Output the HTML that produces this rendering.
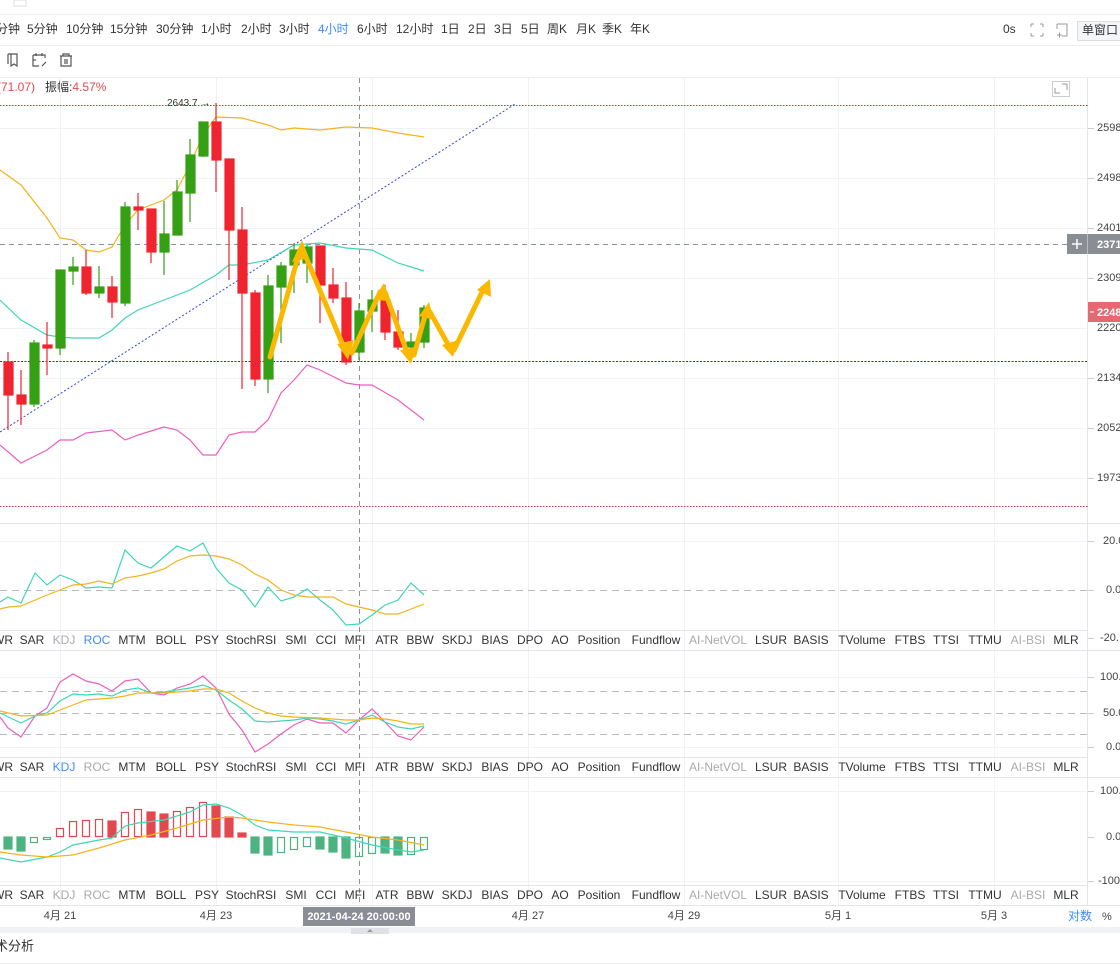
<!DOCTYPE html>
<html><head><meta charset="utf-8"><style>
html,body{margin:0;padding:0;background:#fff;width:1120px;height:965px;overflow:hidden}
svg{display:block;font-family:"Liberation Sans","Noto Sans CJK SC",sans-serif}
</style></head><body>
<svg width="1120" height="965" viewBox="0 0 1120 965" xmlns="http://www.w3.org/2000/svg">
<rect x="14" y="0" width="12" height="6" fill="#fff" stroke="#ddd"/>
<line x1="0" y1="14.5" x2="1120" y2="14.5" stroke="#eceef2"/>
<g font-size="12" fill="#333" dominant-baseline="middle">
<text x="-4" y="30">分钟</text><text x="27" y="30">5分钟</text><text x="66" y="30">10分钟</text><text x="110" y="30">15分钟</text><text x="156" y="30">30分钟</text><text x="201" y="30">1小时</text><text x="241" y="30">2小时</text><text x="279" y="30">3小时</text><text x="318" y="30" fill="#3d8bfd">4小时</text><text x="357" y="30">6小时</text><text x="396" y="30">12小时</text><text x="441" y="30">1日</text><text x="468" y="30">2日</text><text x="494" y="30">3日</text><text x="521" y="30">5日</text><text x="547" y="30">周K</text><text x="576" y="30">月K</text><text x="602" y="30">季K</text><text x="630" y="30">年K</text>
<text x="1003" y="30">0s</text>
</g>
<g stroke="#999" fill="none" stroke-width="1">
<path d="M1031 24h3M1031 24v3M1043 24h-3M1043 24v3M1031 36h3M1031 36v-3M1043 36h-3M1043 36v-3"/>
<path d="M1057 24h10v12h-5M1057 24v5M1057 35h5M1059.5 32.5v5"/>
</g>
<rect x="1077.5" y="21.5" width="50" height="19" fill="#f5f6f8" stroke="#ddd"/>
<text x="1082" y="31" font-size="12" fill="#333" dominant-baseline="middle">单窗口</text>
<line x1="0" y1="45.5" x2="1120" y2="45.5" stroke="#eceef2"/>
<g stroke="#555" fill="none" stroke-width="1.2">
<path d="M8 54h9v12l-3-2-3 2V54M8 54v10"/>
<path d="M33 55h12v3M33 55v11h6M36 53v3M42 53v3M33 60h3M42 66l4-4"/>
<path d="M60 56h12M63 56v-2h6v2M61 56v10h10V56M65 59v5M67 59v5"/>
</g>
<line x1="0" y1="77.5" x2="1120" y2="77.5" stroke="#eceef2"/>
<text x="-3" y="88" font-size="12" fill="#e2494f" dominant-baseline="middle">(71.07)</text>
<text x="45" y="88" font-size="12" fill="#333" dominant-baseline="middle">振幅:<tspan fill="#e2494f">4.57%</tspan></text>
<rect x="1052.5" y="81.5" width="17" height="15" fill="#fff" stroke="#ccc"/>
<path d="M1055 88v5h5M1067 90v-6h-5" stroke="#999" fill="none"/>
<g stroke="#f0f2f5" stroke-width="1">
<line x1="60.5" y1="78" x2="60.5" y2="905"/><line x1="216.5" y1="78" x2="216.5" y2="905"/><line x1="372.5" y1="78" x2="372.5" y2="905"/><line x1="528.5" y1="78" x2="528.5" y2="905"/><line x1="684.5" y1="78" x2="684.5" y2="905"/><line x1="838.5" y1="78" x2="838.5" y2="905"/><line x1="994.5" y1="78" x2="994.5" y2="905"/>
<line x1="0" y1="128.5" x2="1088" y2="128.5"/><line x1="0" y1="178.5" x2="1088" y2="178.5"/><line x1="0" y1="228.5" x2="1088" y2="228.5"/><line x1="0" y1="278.5" x2="1088" y2="278.5"/><line x1="0" y1="328.5" x2="1088" y2="328.5"/><line x1="0" y1="378.5" x2="1088" y2="378.5"/><line x1="0" y1="428.5" x2="1088" y2="428.5"/><line x1="0" y1="478.5" x2="1088" y2="478.5"/>
<line x1="0" y1="541.5" x2="1088" y2="541.5"/><line x1="0" y1="677.5" x2="1088" y2="677.5"/><line x1="0" y1="747.5" x2="1088" y2="747.5"/><line x1="0" y1="791.5" x2="1088" y2="791.5"/><line x1="0" y1="881.5" x2="1088" y2="881.5"/>
</g>
<line x1="1087.5" y1="78" x2="1087.5" y2="905" stroke="#e3e5ea"/>
<g stroke="#e3e5ea"><line x1="0" y1="523.5" x2="1120" y2="523.5"/><line x1="0" y1="630.5" x2="1088" y2="630.5"/><line x1="0" y1="650.5" x2="1120" y2="650.5"/><line x1="0" y1="757.5" x2="1088" y2="757.5"/><line x1="0" y1="777.5" x2="1120" y2="777.5"/><line x1="0" y1="885.5" x2="1088" y2="885.5"/><line x1="0" y1="905.5" x2="1120" y2="905.5"/></g>
<line x1="0" y1="105.5" x2="1088" y2="105.5" stroke="#ee2a35" stroke-dasharray="1.5,1.5"/>
<line x1="0" y1="506.5" x2="1088" y2="506.5" stroke="#ee2a35" stroke-dasharray="1.5,1.5"/>
<line x1="0" y1="361.5" x2="1088" y2="361.5" stroke="#8b1a1a" stroke-dasharray="2,1.5"/>
<line x1="0" y1="244.5" x2="1070" y2="244.5" stroke="#8a929c" stroke-dasharray="5,4"/>
<line x1="359.5" y1="78" x2="359.5" y2="905" stroke="#8a929c" stroke-dasharray="5,4"/>
<g stroke="#bbb" stroke-dasharray="7,5"><line x1="0" y1="590.5" x2="1088" y2="590.5"/><line x1="0" y1="691.5" x2="1088" y2="691.5"/><line x1="0" y1="713.5" x2="1088" y2="713.5"/><line x1="0" y1="734.5" x2="1088" y2="734.5"/></g>
<text x="167" y="106" font-size="10" fill="#333">2643.7 →</text>
<line x1="0" y1="432" x2="515" y2="104" stroke="#3848d6" stroke-dasharray="2,2"/>
<g fill="none" stroke-width="1.2">
<polyline stroke="#f5b31c" points="0,170 21,185 47,218 60,238 73,240 86,250 99,252 112,247 125,225 138,210 164,200 177,190 190,165 203,135 216,117 242,118 268,125 281,130 294,128 320,130 346,127 372,128 398,133 424,137"/>
<polyline stroke="#3fd6b6" points="0,300 21,320 47,335 60,337 73,338 99,338 112,330 125,318 138,310 164,300 190,290 216,275 229,265 242,265 268,260 294,245 320,243 346,248 372,250 398,263 424,271"/>
<polyline stroke="#ea5fc3" points="0,445 21,463 47,450 60,440 73,440 86,433 112,430 125,440 138,435 164,427 177,430 190,440 203,455 216,455 229,435 242,432 255,432 268,420 281,393 294,380 307,365 320,370 346,383 359,385 372,385 398,400 424,420"/>
</g>
<g stroke-width="1.2">
<g stroke="#f0242f" fill="#f0242f">
<line x1="8" y1="352" x2="8" y2="430"/><rect x="4" y="362" width="9" height="33"/>
<line x1="21" y1="370" x2="21" y2="425"/><rect x="17" y="395" width="9" height="9"/>
<line x1="47" y1="322" x2="47" y2="375"/><rect x="43" y="345" width="9" height="3"/>
<line x1="86" y1="250" x2="86" y2="295"/><rect x="82" y="267" width="9" height="26"/>
<line x1="112" y1="276" x2="112" y2="318"/><rect x="108" y="287" width="9" height="15"/>
<line x1="138" y1="193" x2="138" y2="230"/><rect x="134" y="207" width="9" height="3"/>
<line x1="151" y1="209" x2="151" y2="263"/><rect x="147" y="209" width="9" height="43"/>
<line x1="216" y1="103" x2="216" y2="192"/><rect x="212" y="122" width="9" height="38"/>
<line x1="229" y1="159" x2="229" y2="280"/><rect x="225" y="159" width="9" height="71"/>
<line x1="242" y1="207" x2="242" y2="389"/><rect x="238" y="230" width="9" height="63"/>
<line x1="255" y1="290" x2="255" y2="386"/><rect x="251" y="293" width="9" height="86"/>
<line x1="320" y1="246" x2="320" y2="323"/><rect x="316" y="246" width="9" height="39"/>
<line x1="333" y1="268" x2="333" y2="303"/><rect x="329" y="285" width="9" height="13"/>
<line x1="346" y1="282" x2="346" y2="365"/><rect x="342" y="298" width="9" height="64"/>
<line x1="385" y1="285" x2="385" y2="340"/><rect x="381" y="300" width="9" height="32"/>
<line x1="398" y1="310" x2="398" y2="350"/><rect x="394" y="332" width="9" height="15"/>
</g>
<g stroke="#36a014" fill="#36a014">
<line x1="34" y1="340" x2="34" y2="407"/><rect x="30" y="343" width="9" height="61"/>
<line x1="60" y1="270" x2="60" y2="355"/><rect x="56" y="270" width="9" height="78"/>
<line x1="73" y1="257" x2="73" y2="285"/><rect x="69" y="267" width="9" height="4"/>
<line x1="99" y1="266" x2="99" y2="298"/><rect x="95" y="287" width="9" height="6"/>
<line x1="125" y1="202" x2="125" y2="306"/><rect x="121" y="207" width="9" height="96"/>
<line x1="164" y1="201" x2="164" y2="275"/><rect x="160" y="234" width="9" height="18"/>
<line x1="177" y1="180" x2="177" y2="235"/><rect x="173" y="192" width="9" height="43"/>
<line x1="190" y1="139" x2="190" y2="222"/><rect x="186" y="155" width="9" height="38"/>
<line x1="203" y1="122" x2="203" y2="157"/><rect x="199" y="122" width="9" height="34"/>
<line x1="268" y1="275" x2="268" y2="393"/><rect x="264" y="286" width="9" height="93"/>
<line x1="281" y1="262" x2="281" y2="343"/><rect x="277" y="266" width="9" height="21"/>
<line x1="294" y1="243" x2="294" y2="293"/><rect x="290" y="250" width="9" height="15"/>
<line x1="307" y1="245" x2="307" y2="283"/><rect x="303" y="247" width="9" height="16"/>
<line x1="359" y1="303" x2="359" y2="360"/><rect x="355" y="311" width="9" height="41"/>
<line x1="372" y1="290" x2="372" y2="332"/><rect x="368" y="300" width="9" height="11"/>
<line x1="411" y1="333" x2="411" y2="352"/><rect x="407" y="342" width="9" height="5"/>
<line x1="424" y1="305" x2="424" y2="348"/><rect x="420" y="308" width="9" height="34"/>
</g>
</g>
<g stroke="#fbb800" stroke-width="5" fill="none" stroke-linecap="round" stroke-linejoin="round">
<polyline points="270,357 300,250"/><polyline points="303,250 345,350"/><polyline points="352,353 380,292"/><polyline points="385,292 408,355"/><polyline points="414,355 426,312"/><polyline points="430,312 450,348"/><polyline points="454,350 484,288"/>
</g>
<g fill="#fbb800">
<polygon points="302,240 292,262 309,258"/><polygon points="348,360 337,344 354,340"/><polygon points="384,283 373,300 390,301"/><polygon points="411,364 400,350 416,347"/><polygon points="429,302 419,316 434,320"/><polygon points="453,357 442,345 458,340"/><polygon points="490,279 477,290 491,297"/>
</g>
<g fill="none" stroke-width="1.2">
<polyline stroke="#3fd6b6" points="0,602 8,597 21,603 35,573 47,585 60,575 73,580 86,588 99,587 112,588 125,550 138,563 151,568 164,557 177,546 190,551 203,543 216,568 229,583 242,590 255,607 268,587 281,601 294,597 307,589 320,600 333,610 346,625 359,624 372,615 385,605 398,600 411,583 424,595"/>
<polyline stroke="#f5b31c" points="0,609 8,607 21,606 47,595 60,590 73,585 86,584 99,581 112,584 125,578 138,576 151,573 164,569 177,561 190,556 203,555 216,556 229,559 242,565 255,574 268,580 281,590 294,595 307,597 333,597 346,604 359,607 372,610 385,614 398,614 411,609 424,604"/>
<polyline stroke="#ea5fc3" points="0,717 8,728 21,737 35,716 47,708 60,682 73,674 86,681 99,684 112,691 125,681 138,679 151,693 164,695 177,688 190,684 203,676 216,688 229,714 242,730 255,752 268,744 281,734 294,725 307,719 320,723 333,723 346,733 359,720 372,709 385,722 398,736 411,740 424,727"/>
<polyline stroke="#3fd6b6" points="0,713 21,723 35,716 47,713 60,701 73,694 86,695 99,694 112,696 125,690 138,688 151,693 164,692 177,690 190,688 203,685 216,690 229,700 242,709 255,721 268,722 294,720 307,718 320,719 333,721 346,724 359,720 372,715 385,722 398,727 411,729 424,726"/>
<polyline stroke="#f5b31c" points="0,711 21,716 47,715 60,710 73,705 86,700 99,699 112,698 125,696 138,693 164,693 177,692 190,691 203,689 216,689 229,693 242,701 255,708 268,713 281,716 294,717 320,718 346,720 359,720 372,718 385,719 398,721 411,724 424,724"/>
</g>
<g stroke-width="1.2">
<g fill="#4db380" stroke="#4db380">
<rect x="4" y="837" width="8" height="12"/><rect x="17" y="837" width="8" height="14"/><rect x="251" y="837" width="8" height="16"/><rect x="264" y="837" width="8" height="18"/><rect x="316" y="837" width="8" height="12"/><rect x="329" y="837" width="8" height="15"/><rect x="342" y="837" width="8" height="21"/><rect x="381" y="837" width="8" height="16"/><rect x="394" y="837" width="8" height="18"/>
</g>
<g fill="none" stroke="#4db380">
<rect x="30.5" y="837.5" width="7" height="5"/><rect x="43.5" y="837.5" width="7" height="2"/><rect x="277.5" y="837.5" width="7" height="15"/><rect x="290.5" y="837.5" width="7" height="12"/><rect x="303.5" y="837.5" width="7" height="9"/><rect x="355.5" y="837.5" width="7" height="19"/><rect x="368.5" y="837.5" width="7" height="16"/><rect x="407.5" y="837.5" width="7" height="17"/><rect x="420.5" y="837.5" width="7" height="12"/>
</g>
<g fill="#e2494f" stroke="#e2494f">
<rect x="108" y="821" width="8" height="16"/><rect x="147" y="812" width="8" height="25"/><rect x="160" y="814" width="8" height="23"/><rect x="212" y="806" width="8" height="31"/><rect x="225" y="817" width="8" height="20"/><rect x="238" y="833" width="8" height="4"/>
</g>
<g fill="none" stroke="#e2494f">
<rect x="56.5" y="828.5" width="7" height="8"/><rect x="69.5" y="821.5" width="7" height="15"/><rect x="82.5" y="820.5" width="7" height="16"/><rect x="95.5" y="819.5" width="7" height="17"/><rect x="121.5" y="812.5" width="7" height="24"/><rect x="134.5" y="809.5" width="7" height="27"/><rect x="173.5" y="811.5" width="7" height="25"/><rect x="186.5" y="807.5" width="7" height="29"/><rect x="199.5" y="802.5" width="7" height="34"/>
</g>
</g>
<g fill="none" stroke-width="1.2">
<polyline stroke="#3fd6b6" points="0,858 21,862 47,857 60,852 73,845 99,840 112,838 125,826 138,823 164,820 190,812 203,805 216,804 229,808 242,815 255,825 268,830 294,832 320,832 346,838 372,845 398,850 411,852 424,850"/>
<polyline stroke="#f5b31c" points="0,852 21,855 47,857 73,855 99,848 125,840 151,835 177,828 203,820 229,817 242,818 268,822 294,825 320,827 346,832 372,837 398,840 424,845"/>
</g>
<g font-size="12" fill="#333" text-anchor="middle" dominant-baseline="middle">
<g transform="translate(0,641)"><text x="3">WR</text><text x="32">SAR</text><text x="64" fill="#aaa">KDJ</text><text x="97" fill="#3d8bfd">ROC</text><text x="132">MTM</text><text x="171">BOLL</text><text x="207">PSY</text><text x="251">StochRSI</text><text x="296">SMI</text><text x="326">CCI</text><text x="355">MFI</text><text x="387">ATR</text><text x="420">BBW</text><text x="457">SKDJ</text><text x="495">BIAS</text><text x="530">DPO</text><text x="560">AO</text><text x="599">Position</text><text x="656">Fundflow</text><text x="718" fill="#aaa">AI-NetVOL</text><text x="771">LSUR</text><text x="811">BASIS</text><text x="862">TVolume</text><text x="910">FTBS</text><text x="946">TTSI</text><text x="985">TTMU</text><text x="1028" fill="#aaa">AI-BSI</text><text x="1066">MLR</text></g>
<g transform="translate(0,768)"><text x="3">WR</text><text x="32">SAR</text><text x="64" fill="#3d8bfd">KDJ</text><text x="97" fill="#aaa">ROC</text><text x="132">MTM</text><text x="171">BOLL</text><text x="207">PSY</text><text x="251">StochRSI</text><text x="296">SMI</text><text x="326">CCI</text><text x="355">MFI</text><text x="387">ATR</text><text x="420">BBW</text><text x="457">SKDJ</text><text x="495">BIAS</text><text x="530">DPO</text><text x="560">AO</text><text x="599">Position</text><text x="656">Fundflow</text><text x="718" fill="#aaa">AI-NetVOL</text><text x="771">LSUR</text><text x="811">BASIS</text><text x="862">TVolume</text><text x="910">FTBS</text><text x="946">TTSI</text><text x="985">TTMU</text><text x="1028" fill="#aaa">AI-BSI</text><text x="1066">MLR</text></g>
<g transform="translate(0,896)"><text x="3">WR</text><text x="32">SAR</text><text x="64" fill="#aaa">KDJ</text><text x="97" fill="#aaa">ROC</text><text x="132">MTM</text><text x="171">BOLL</text><text x="207">PSY</text><text x="251">StochRSI</text><text x="296">SMI</text><text x="326">CCI</text><text x="355">MFI</text><text x="387">ATR</text><text x="420">BBW</text><text x="457">SKDJ</text><text x="495">BIAS</text><text x="530">DPO</text><text x="560">AO</text><text x="599">Position</text><text x="656">Fundflow</text><text x="718" fill="#aaa">AI-NetVOL</text><text x="771">LSUR</text><text x="811">BASIS</text><text x="862">TVolume</text><text x="910">FTBS</text><text x="946">TTSI</text><text x="985">TTMU</text><text x="1028" fill="#aaa">AI-BSI</text><text x="1066">MLR</text></g>
</g>
<g font-size="11" fill="#444" dominant-baseline="middle">
<g stroke="#ccc"><line x1="1088" y1="128.5" x2="1094" y2="128.5"/><line x1="1088" y1="178.5" x2="1094" y2="178.5"/><line x1="1088" y1="228.5" x2="1094" y2="228.5"/><line x1="1088" y1="278.5" x2="1094" y2="278.5"/><line x1="1088" y1="378.5" x2="1094" y2="378.5"/><line x1="1088" y1="428.5" x2="1094" y2="428.5"/><line x1="1088" y1="478.5" x2="1094" y2="478.5"/><line x1="1088" y1="541.5" x2="1094" y2="541.5"/><line x1="1088" y1="590.5" x2="1094" y2="590.5"/><line x1="1088" y1="638.5" x2="1094" y2="638.5"/><line x1="1088" y1="677.5" x2="1094" y2="677.5"/><line x1="1088" y1="713.5" x2="1094" y2="713.5"/><line x1="1088" y1="747.5" x2="1094" y2="747.5"/><line x1="1088" y1="791.5" x2="1094" y2="791.5"/><line x1="1088" y1="837.5" x2="1094" y2="837.5"/><line x1="1088" y1="881.5" x2="1094" y2="881.5"/></g>
<text x="1097" y="128">2598</text><text x="1097" y="178">2498</text><text x="1097" y="228">2401</text><text x="1097" y="278">2309</text><text x="1097" y="328">2220</text><text x="1097" y="378">2134</text><text x="1097" y="428">2052</text><text x="1097" y="478">1973</text>
<text x="1103" y="541">20.0</text><text x="1106" y="590">0.0</text><text x="1100" y="638">-20.</text>
<text x="1100" y="677">100.</text><text x="1103" y="713">50.0</text><text x="1106" y="747">0.0</text>
<text x="1100" y="791">100.</text><text x="1106" y="837">0.0</text><text x="1098" y="881">-100</text>
</g>
<rect x="1067" y="234" width="53" height="20" fill="#8a8d93"/>
<line x1="1087.5" y1="234" x2="1087.5" y2="254" stroke="#fff" stroke-opacity="0.4"/>
<path d="M1072 244h10M1077 239v10" stroke="#fff" stroke-width="1.5"/>
<text x="1097" y="245" font-size="11" font-weight="bold" fill="#fff" dominant-baseline="middle">2371</text>
<rect x="1088" y="302" width="32" height="20" fill="#e56873"/>
<path d="M1090 312h4" stroke="#fff"/>
<text x="1097" y="313" font-size="11" font-weight="bold" fill="#fff" dominant-baseline="middle">2248</text>
<g font-size="11" fill="#444" dominant-baseline="middle" text-anchor="middle">
<text x="60" y="916">4月 21</text><text x="216" y="916">4月 23</text><text x="528" y="916">4月 27</text><text x="684" y="916">4月 29</text><text x="838" y="916">5月 1</text><text x="994" y="916">5月 3</text>
</g>
<rect x="303" y="907" width="112" height="19" fill="#8a8d93"/>
<text x="359" y="917" font-size="11" font-weight="bold" fill="#fff" text-anchor="middle" dominant-baseline="middle">2021-04-24 20:00:00</text>
<text x="1068" y="917" font-size="12" fill="#3d8bfd" dominant-baseline="middle">对数</text>
<text x="1102" y="917" font-size="11" fill="#444" dominant-baseline="middle">%</text>
<rect x="0" y="927" width="1120" height="6" fill="#f1f2f5"/>
<rect x="351" y="928" width="38" height="6" fill="#dfe1e6"/>
<path d="M367 932l3-3 3 3z" fill="#999"/>
<text x="-5" y="947" font-size="13" fill="#333" dominant-baseline="middle">术分析</text>
<line x1="0" y1="963.5" x2="1120" y2="963.5" stroke="#eceef2"/>
</svg>
</body></html>
